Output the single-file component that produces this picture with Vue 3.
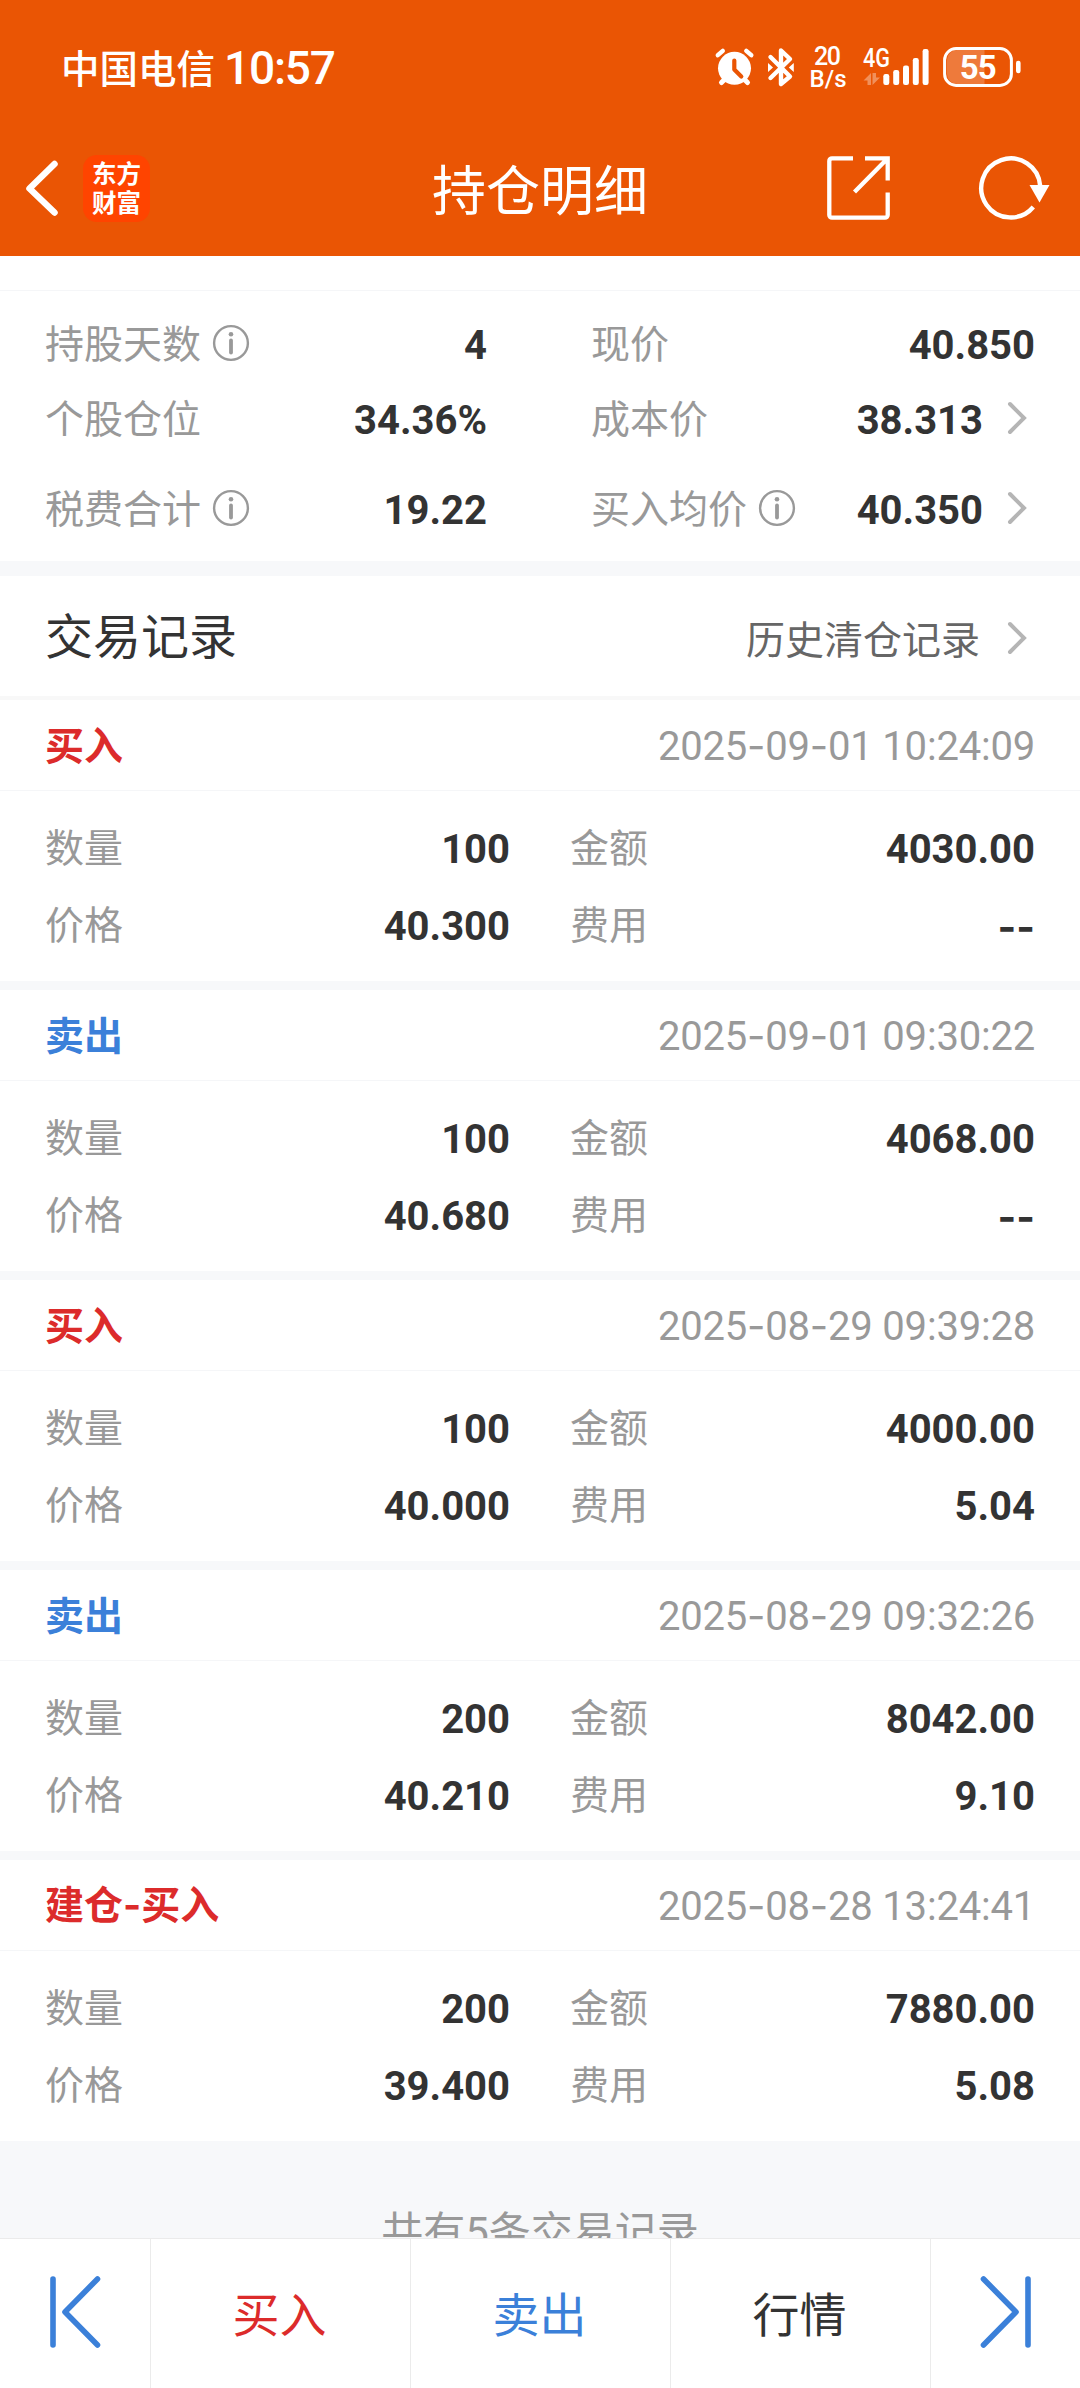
<script setup>
const summary = [
  {
    left: { label: '持股天数', info: true, value: '4' },
    right: { label: '现价', value: '40.850' },
  },
  {
    left: { label: '个股仓位', value: '34.36%' },
    right: { label: '成本价', value: '38.313', link: true },
  },
  {
    left: { label: '税费合计', info: true, value: '19.22' },
    right: { label: '买入均价', info: true, value: '40.350', link: true },
  },
]

const records = [
  { type: '买入', side: 'buy', time: '2025-09-01 10:24:09', qty: '100', amount: '4030.00', price: '40.300', fee: '--' },
  { type: '卖出', side: 'sell', time: '2025-09-01 09:30:22', qty: '100', amount: '4068.00', price: '40.680', fee: '--' },
  { type: '买入', side: 'buy', time: '2025-08-29 09:39:28', qty: '100', amount: '4000.00', price: '40.000', fee: '5.04' },
  { type: '卖出', side: 'sell', time: '2025-08-29 09:32:26', qty: '200', amount: '8042.00', price: '40.210', fee: '9.10' },
  { type: '建仓-买入', side: 'buy', time: '2025-08-28 13:24:41', qty: '200', amount: '7880.00', price: '39.400', fee: '5.08' },
]

// Hyphens are set in a wider face than the digits around them
const pieces = (text) => text.split(/([-:])/).filter(Boolean)
const pieceClass = (p) => ({ dash: p === '-', colon: p === ':' })
</script>

<template>
  <div class="screen">
    <header class="top">
      <div class="status">
        <div class="carrier"><span>中国电信</span><span class="clock">10:57</span></div>
        <svg class="status-icons" width="310" height="46" viewBox="713 44 310 46">
          <g fill="none" stroke="#fff" stroke-linecap="round">
            <circle cx="734.5" cy="68.3" r="16.5" fill="#fff" stroke="none" />
            <path d="M717.8 55.2l5-4.3M751.3 55.2l-5-4.3" stroke-width="4.4" />
            <path d="M721.5 82.5l4-4M747.5 82.5l-4-4" stroke-width="5" />
            <path d="M734.3 60.5v9l7 7" stroke="#ea5504" stroke-width="4.2" stroke-linejoin="round" />
            <path d="M770.500 57l19.500 19.500l-9 7.500v-33.500l9 8.500l-19.500 19" stroke-width="4.4" stroke-linejoin="round" />
            <path d="M768 63v9l5-4.500zM793.800 63v9l-5-4.500z" fill="#fff" stroke="none" />
          </g>
          <g class="status-text" fill="#fff">
            <text x="827.500" y="64.800" font-size="25" text-anchor="middle" textLength="27">20</text>
            <text x="828" y="87" font-size="24" text-anchor="middle" textLength="37">B/s</text>
            <text x="876.500" y="66.800" font-size="25" text-anchor="middle" textLength="27" lengthAdjust="spacingAndGlyphs">4G</text>
          </g>
          <g fill="#fff">
            <path opacity=".35" d="M863.500 80.500l7.500-7.500v12h-3.500v-4.500zM880 77.500l-7.500 7.500v-12h3.500v4.500z" />
            <rect x="883.300" y="74" width="6" height="11" rx="2.200" />
            <rect x="893.200" y="70" width="6" height="15" rx="2.200" />
            <rect x="903" y="65.600" width="6" height="19.400" rx="2.200" />
            <rect x="912.800" y="58" width="6" height="27" rx="2.200" />
            <rect x="922.600" y="49" width="6" height="36" rx="2.200" />
          </g>
          <path d="M984.500 50H957a10 10 0 0 0-10 10v14a10 10 0 0 0 10 10h27.500z" fill="#fff" opacity=".22" />
          <rect x="944.600" y="48.600" width="66.800" height="36.800" rx="11.500" fill="none" stroke="#fff" stroke-width="3" />
          <rect x="1016" y="60.700" width="4.600" height="12.600" rx="2.200" fill="#fff" />
          <text class="status-text strong" x="978.300" y="79" font-size="33" text-anchor="middle" textLength="37" fill="#fff">55</text>
        </svg>
      </div>
      <nav class="nav">
        <div class="nav-left">
          <svg width="36" height="60" viewBox="0 0 36 60">
            <path d="M30.500 6L5.500 30.500l25 24" fill="none" stroke="#fff" stroke-width="6.500" stroke-linecap="round" stroke-linejoin="round" />
          </svg>
          <div class="logo"><span>东方</span><span>财富</span></div>
        </div>
        <h1>持仓明细</h1>
        <div class="nav-right">
          <svg width="64" height="64" viewBox="0 0 64 64">
            <path d="M26 2.300H5a2.700 2.700 0 0 0-2.700 2.700v54a2.700 2.700 0 0 0 2.700 2.700h53a2.700 2.700 0 0 0 2.700-2.700V36.500M38 2.300h22.700V24.500M60.500 2.500L27.500 36" fill="none" stroke="#fff" stroke-width="4.300" />
          </svg>
          <svg width="74" height="68" viewBox="0 0 74 68">
            <path d="M63.200 32A29.500 29.500 0 1 0 56.300 53" fill="none" stroke="#fff" stroke-width="4.400" />
            <path d="M52.500 31h20l-10 17.500z" fill="#fff" />
          </svg>
        </div>
      </nav>
    </header>

    <main class="content">
      <section class="summary">
        <div v-for="(row, i) in summary" :key="i" class="row">
          <div v-for="(cell, side) in row" :key="side" class="cell" :class="side">
            <span class="label">{{ cell.label }}</span>
            <svg v-if="cell.info" class="info" width="38" height="38" viewBox="0 0 38 38">
              <circle cx="19" cy="19" r="16.900" fill="none" stroke="#999" stroke-width="2.400" />
              <circle cx="19" cy="10.300" r="2.300" fill="#999" />
              <path d="M19 16.500v12" stroke="#999" stroke-width="3.800" stroke-linecap="round" />
            </svg>
            <span class="value">{{ cell.value }}</span>
            <svg v-if="cell.link" class="arrow" width="20" height="34" viewBox="0 0 20 34">
              <path d="M3 3l14 14L3 31" fill="none" stroke="#b5b5b5" stroke-width="4" stroke-linecap="round" />
            </svg>
          </div>
        </div>
      </section>

      <section class="heading">
        <h2>交易记录</h2>
        <div class="history">
          <span>历史清仓记录</span>
          <svg class="arrow" width="20" height="34" viewBox="0 0 20 34">
            <path d="M3 3l14 14L3 31" fill="none" stroke="#b5b5b5" stroke-width="4" stroke-linecap="round" />
          </svg>
        </div>
      </section>

      <article v-for="r in records" :key="r.time" class="record">
        <div class="record-head">
          <span class="type" :class="r.side"><span v-for="(p, i) in pieces(r.type)" :key="i" :class="pieceClass(p)">{{ p }}</span></span>
          <span class="time"><span v-for="(p, i) in pieces(r.time)" :key="i" :class="pieceClass(p)">{{ p }}</span></span>
        </div>
        <div class="record-body">
          <div class="record-row">
            <span class="label">数量</span><span class="value">{{ r.qty }}</span>
            <span class="label second">金额</span><span class="value">{{ r.amount }}</span>
          </div>
          <div class="record-row">
            <span class="label">价格</span><span class="value">{{ r.price }}</span>
            <span class="label second">费用</span>
            <span class="value"><span v-for="(p, i) in pieces(r.fee)" :key="i" :class="pieceClass(p)">{{ p }}</span></span>
          </div>
        </div>
      </article>
      <p class="total">共有<span class="num">5</span>条交易记录</p>
    </main>

    <footer class="bar">
      <div class="edge">
        <svg width="52" height="74" viewBox="0 0 52 74">
          <path d="M4 4v66M48.500 4L16 37l32.500 33" fill="none" stroke="#3b80d9" stroke-width="5.600" stroke-linecap="round" stroke-linejoin="round" />
        </svg>
      </div>
      <div class="tab buy">买入</div>
      <div class="tab sell">卖出</div>
      <div class="tab">行情</div>
      <div class="edge">
        <svg width="52" height="74" viewBox="0 0 52 74">
          <path d="M48 4v66M3.500 4L36 37L3.500 70" fill="none" stroke="#3b80d9" stroke-width="5.600" stroke-linecap="round" stroke-linejoin="round" />
        </svg>
      </div>
    </footer>
  </div>
</template>

<style>
body {
  margin: 0;
}
</style>

<style scoped>
.screen {
  box-sizing: border-box;
  width: 1080px;
  height: 2388px;
  display: flex;
  flex-direction: column;
  overflow: hidden;
  background: #fff;
  color: #333;
  font-family: "Noto Sans CJK SC", sans-serif;
  font-size: 39px;
  line-height: 1;
}
svg {
  display: block;
  flex: none;
}
h1,
h2,
p {
  margin: 0;
  font-weight: 400;
}
.top {
  flex: none;
  height: 256px;
  background: #ea5504;
  color: #fff;
}
.status {
  height: 90px;
  padding: 44px 57px 0 61px;
  box-sizing: border-box;
  display: flex;
  justify-content: space-between;
}
.carrier {
  display: flex;
  align-items: center;
  height: 44px;
  font-size: 38.500px;
  font-weight: 500;
}
.clock {
  margin-left: 9px;
  padding-top: 3px;
  font-family: Roboto, sans-serif;
  font-size: 46px;
  letter-spacing: -1.200px;
}
.status-icons {
  overflow: visible;
}
.status-text {
  font-family: Roboto, sans-serif;
  font-weight: 500;
}
.strong {
  font-weight: 700;
}
.nav {
  height: 132px;
  padding-top: 32px;
  display: grid;
  grid-template-columns: 1fr auto 1fr;
  align-items: center;
}
.nav-left {
  display: flex;
  align-items: center;
  padding-left: 24px;
}
.logo {
  width: 67px;
  height: 67px;
  margin-left: 23px;
  border-radius: 14px;
  background: #ff4400;
  display: flex;
  flex-direction: column;
  justify-content: center;
  align-items: center;
  font-family: "Noto Sans CJK SC", sans-serif;
  font-size: 24.500px;
  font-weight: 700;
  line-height: 29px;
}
.logo span:first-child {
  margin-top: -2px;
}
.nav h1 {
  font-size: 54px;
  line-height: 60px;
}
.nav-right {
  display: flex;
  align-items: center;
  justify-content: flex-end;
  gap: 86px;
  padding-right: 29px;
}
.content {
  height: 1982px;
  overflow: hidden;
}
.summary {
  margin-top: 34px;
  border-top: 1px solid #f5f6f8;
  padding: 21px 45px 24px;
  border-bottom: 15px solid #f7f8fa;
}
.row {
  display: flex;
  height: 60px;
}
.row:nth-child(2) {
  margin: 15px 0 30px;
}
.cell {
  display: flex;
  align-items: center;
}
.left {
  width: 442px;
}
.right {
  flex: 1;
  margin-left: 104px;
}
.label {
  color: #999;
  padding-bottom: 2px;
}
.info {
  margin-left: 11px;
  margin-top: 2px;
}
.value {
  margin-left: auto;
  padding-top: 7px;
  font-family: Roboto, sans-serif;
  font-size: 40px;
  font-weight: 700;
}
.arrow {
  margin-left: 24px;
  margin-top: 2px;
  margin-right: 8px;
}
.heading {
  height: 120px;
  padding: 0 45px;
  border-bottom: 4px solid #f8f8f8;
  display: flex;
  justify-content: space-between;
  align-items: center;
}
h2 {
  font-size: 48px;
  padding-bottom: 7px;
}
.history {
  display: flex;
  align-items: center;
  color: #666;
  padding-top: 2px;
}
.history .arrow {
  margin-left: 27px;
}
.record + .record {
  border-top: 9px solid #f7f8fa;
}
.record-head {
  height: 90px;
  padding: 0 45px;
  border-bottom: 1px solid #f5f6f8;
  display: flex;
  align-items: center;
  justify-content: space-between;
}
.type {
  font-weight: 700;
  padding-bottom: 3px;
}
.buy {
  color: #dc2b2b;
}
.sell {
  color: #3b80d9;
}
.time {
  font-family: Roboto, sans-serif;
  font-size: 40px;
  color: #999;
  padding-top: 3px;
  letter-spacing: -0.200px;
}
.dash {
  font-family: Inter, sans-serif;
}
.record-body {
  height: 154px;
  padding: 17px 45px 19px;
}
.record-row {
  height: 77px;
  display: grid;
  grid-template-columns: 100px 365px 100px 425px;
  align-items: center;
}
.record-row .second {
  padding-left: 60px;
  white-space: nowrap;
}
.total {
  height: 97px;
  padding-top: 67px;
  box-sizing: border-box;
  background: #f7f8fa;
  color: #999;
  font-size: 42px;
  text-align: center;
}
.num {
  font-family: Roboto, sans-serif;
}
.bar {
  flex: none;
  height: 149px;
  border-top: 1px solid #ebebeb;
  display: grid;
  grid-template-columns: 150px 1fr 1fr 1fr 150px;
  background: #fff;
}
.edge,
.tab {
  display: flex;
  align-items: center;
  justify-content: center;
}
.edge {
  padding-bottom: 3px;
}
.tab {
  font-size: 47px;
  padding: 0 2px 5px 0;
  border-left: 1px solid #ebebeb;
}
.tab + .edge {
  border-left: 1px solid #ebebeb;
}
</style>
